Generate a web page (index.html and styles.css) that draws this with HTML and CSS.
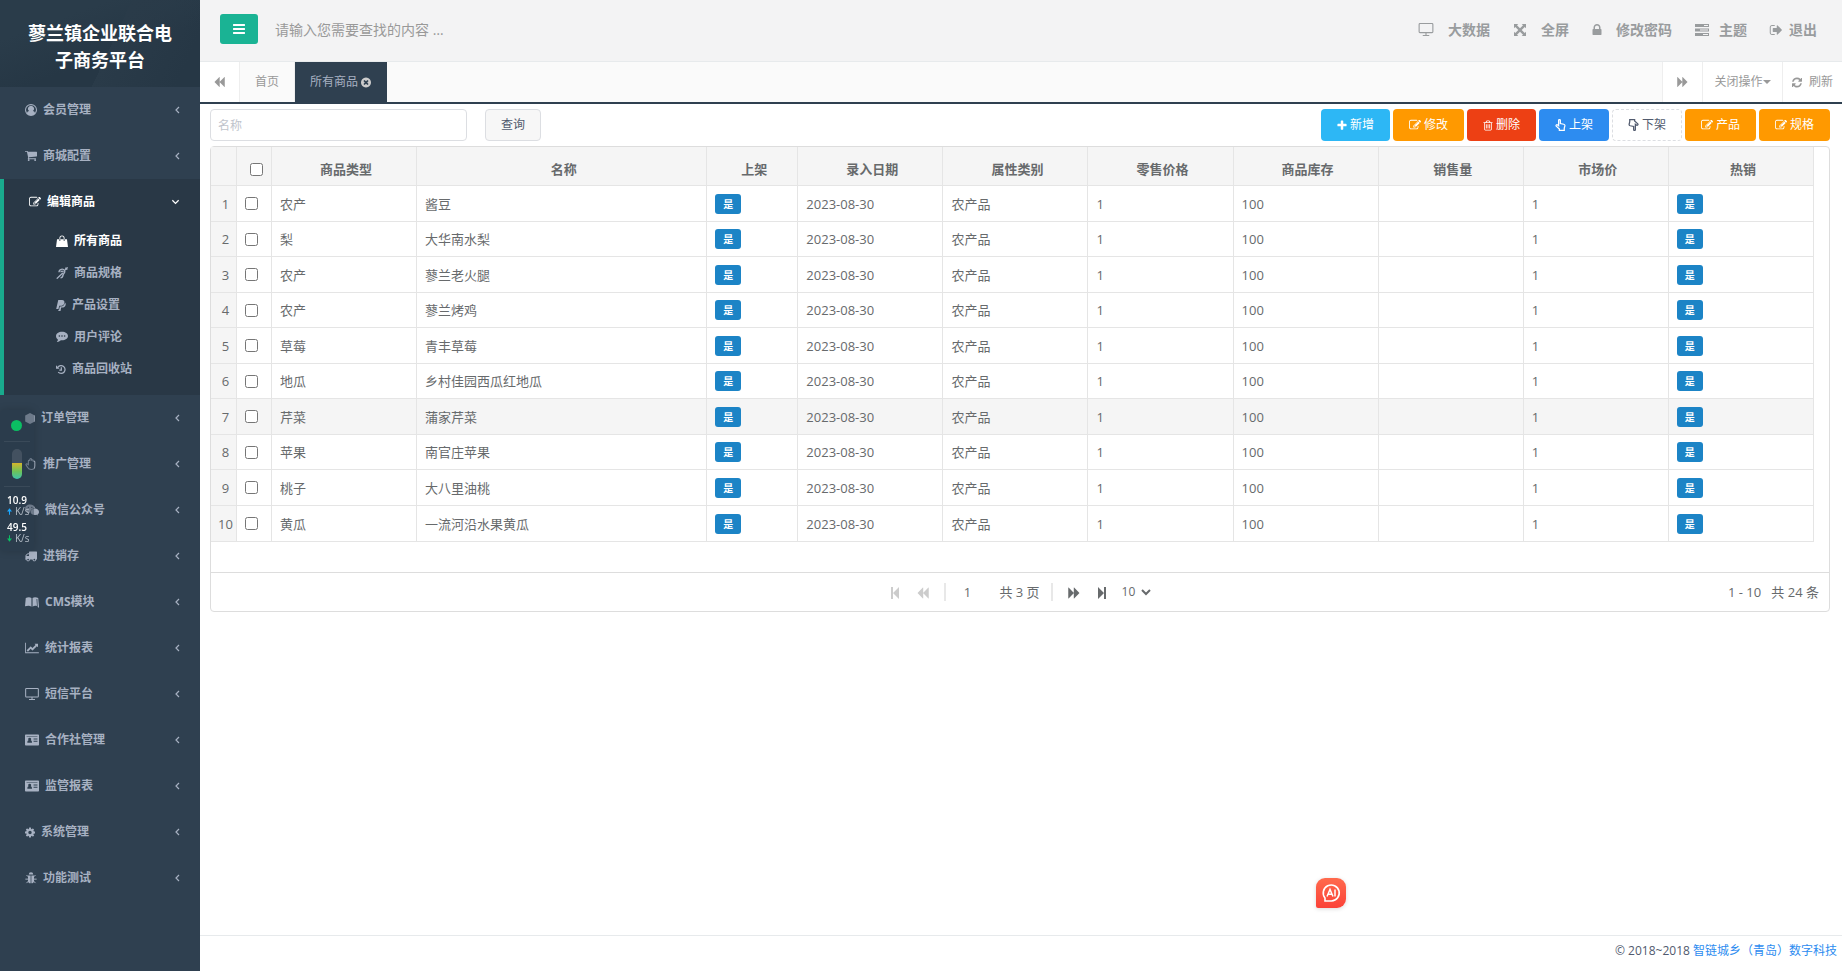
FILE: index.html
```html
<!DOCTYPE html>
<html lang="zh-CN">
<head>
<meta charset="utf-8">
<title>蓼兰镇企业联合电子商务平台</title>
<link rel="stylesheet" href="styles.css">
</head>
<body>
<svg class="sprite" aria-hidden="true">
  <symbol id="bars" viewBox="128 128 1536 1536"><path d="M1664 1344v128q0 26-19 45t-45 19h-1408q-26 0-45-19t-19-45v-128q0-26 19-45t45-19h1408q26 0 45 19t19 45zm0-512v128q0 26-19 45t-45 19h-1408q-26 0-45-19t-19-45v-128q0-26 19-45t45-19h1408q26 0 45 19t19 45zm0-512v128q0 26-19 45t-45 19h-1408q-26 0-45-19t-19-45v-128q0-26 19-45t45-19h1408q26 0 45 19t19 45z"/></symbol>
  <symbol id="plus" viewBox="128 128 1536 1536"><path d="M1600 736v192q0 40-28 68t-68 28h-416v416q0 40-28 68t-68 28h-192q-40 0-68-28t-28-68v-416h-416q-40 0-68-28t-28-68v-192q0-40 28-68t68-28h416v-416q0-40 28-68t68-28h192q40 0 68 28t28 68v416h416q40 0 68 28t28 68z"/></symbol>
  <symbol id="edit" viewBox="0 0 1792 1792"><path d="M888 1184l116-116-152-152-116 116v56h96v96h56zm440-720q-16-16-33 1l-350 350q-17 17-1 33t33-1l350-350q17-17 1-33zm80 594v190q0 119-84.5 203.5t-203.5 84.5h-832q-119 0-203.5-84.5t-84.5-203.5v-832q0-119 84.5-203.5t203.5-84.5h832q63 0 117 25 15 7 18 23 3 17-9 29l-49 49q-14 14-32 8-23-6-45-6h-832q-66 0-113 47t-47 113v832q0 66 47 113t113 47h832q66 0 113-47t47-113v-126q0-13 9-22l64-64q15-15 35-7t20 29zm-96-738l288 288-672 672h-288v-288zm444 132l-92 92-288-288 92-92q28-28 68-28t68 28l152 152q28 28 28 68t-28 68z"/></symbol>
  <symbol id="cart" viewBox="64 128 1664 1664"><path d="M704 1536q0 52-38 90t-90 38-90-38-38-90 38-90 90-38 90 38 38 90zm896 0q0 52-38 90t-90 38-90-38-38-90 38-90 90-38 90 38 38 90zm128-1088v512q0 24-16.5 42.5t-40.5 21.5l-1044 122q13 60 13 70 0 16-24 64h920q26 0 45 19t19 45-19 45-45 19h-1024q-26 0-45-19t-19-45q0-11 8-31.5t16-36 21.5-40 15.5-29.5l-177-823h-204q-26 0-45-19t-19-45 19-45 45-19h256q16 0 28.5 6.5t19.5 15.5 13 24.5 8 26 5.5 29.5 4.5 26h1201q26 0 45 19t19 45z"/></symbol>
  <symbol id="angle" viewBox="0 0 5 8"><path d="M4 1 1 4l3 3" fill="none" stroke="currentColor" stroke-width="1.200"/></symbol>
  <symbol id="angle-down" viewBox="0 0 10 8"><path d="M1.5 2 5 5.500 8.500 2" fill="none" stroke="currentColor" stroke-width="1.400"/></symbol>
  <symbol id="backward" viewBox="100 100 1664 1592"><path d="M1683 141q19-19 32-13t13 32v1472q0 26-13 32t-32-13l-710-710q-9-9-13-19v710q0 26-13 32t-32-13l-710-710q-19-19-19-45t19-45l710-710q19-19 32-13t13 32v710q4-10 13-19z"/></symbol>
  <symbol id="step" viewBox="0 0 8 12"><path d="M0 0h2v12H0zM8 0v12L2 6z"/></symbol>
  <symbol id="lock" viewBox="320 128 1152 1408"><path d="M640 768h512v-192q0-106-75-181t-181-75-181 75-75 181v192zm832 96v576q0 40-28 68t-68 28h-960q-40 0-68-28t-28-68v-576q0-40 28-68t68-28h32v-192q0-184 132-316t316-132 316 132 132 316v192h32q40 0 68 28t28 68z"/></symbol>
  <symbol id="trash" viewBox="128 64 1536 1664"><path d="M704 736v576q0 14-9 23t-23 9h-64q-14 0-23-9t-9-23v-576q0-14 9-23t23-9h64q14 0 23 9t9 23zm256 0v576q0 14-9 23t-23 9h-64q-14 0-23-9t-9-23v-576q0-14 9-23t23-9h64q14 0 23 9t9 23zm256 0v576q0 14-9 23t-23 9h-64q-14 0-23-9t-9-23v-576q0-14 9-23t23-9h64q14 0 23 9t9 23zm128 724v-948h-896v948q0 22 7 40.5t14.5 27 10.5 8.5h832q3 0 10.5-8.5t14.5-27 7-40.5zm-672-1076h448l-48-117q-7-9-17-11h-317q-10 2-17 11zm928 32v64q0 14-9 23t-23 9h-96v948q0 83-47 143.5t-113 60.5h-832q-66 0-113-58.5t-47-141.5v-952h-96q-14 0-23-9t-9-23v-64q0-14 9-23t23-9h309l70-167q15-37 54-63t79-26h320q40 0 79 26t54 63l70 167h309q14 0 23 9t9 23z"/></symbol>
  <symbol id="refresh" viewBox="128 128 1536 1536"><path d="M1639 1056q0 5-1 7-64 268-268 434.5t-478 166.5q-146 0-282.5-55t-243.5-157l-129 129q-19 19-45 19t-45-19-19-45v-448q0-26 19-45t45-19h448q26 0 45 19t19 45-19 45l-137 137q71 66 161 102t187 36q134 0 250-65t186-179q11-17 53-117 8-23 30-23h192q13 0 22.5 9.5t9.5 22.5zm25-800v448q0 26-19 45t-45 19h-448q-26 0-45-19t-19-45 19-45l138-138q-148-137-349-137-134 0-250 65t-186 179q-11 17-53 117-8 23-30 23h-199q-13 0-22.5-9.5t-9.5-22.5v-7q65-268 270-434.5t480-166.5q146 0 284 55.5t245 156.5l130-129q19-19 45-19t45 19 19 45z"/></symbol>
  <symbol id="close" viewBox="128 128 1536 1536"><path d="M1277 1122q0-26-19-45l-181-181 181-181q19-19 19-45 0-27-19-46l-90-90q-19-19-46-19-26 0-45 19l-181 181-181-181q-19-19-45-19-27 0-46 19l-90 90q-19 19-19 46 0 26 19 45l181 181-181 181q-19 19-19 45 0 27 19 46l90 90q19 19 46 19 26 0 45-19l181-181 181 181q19 19 45 19 27 0 46-19l90-90q19-19 19-46zm387-226q0 209-103 385.5t-279.5 279.5-385.5 103-385.5-103-279.5-279.5-103-385.5 103-385.5 279.5-279.5 385.5-103 385.5 103 279.5 279.5 103 385.5z"/></symbol>
  <symbol id="cog" viewBox="128 128 1536 1536"><path d="M1152 896q0-106-75-181t-181-75-181 75-75 181 75 181 181 75 181-75 75-181zm512-109v222q0 12-8 23t-20 13l-185 28q-19 54-39 91 35 50 107 138 10 12 10 25t-9 23q-27 37-99 108t-94 71q-12 0-26-9l-138-108q-44 23-91 38-16 136-29 186-7 28-36 28h-222q-14 0-24.5-8.5t-11.5-21.5l-28-184q-49-16-90-37l-141 107q-10 9-25 9-14 0-25-11-126-114-165-168-7-10-7-23 0-12 8-23 15-21 51-66.5t54-70.5q-27-50-41-99l-183-27q-13-2-21-12.5t-8-23.5v-222q0-12 8-23t19-13l186-28q14-46 39-92-40-57-107-138-10-12-10-24 0-10 9-23 26-36 98.5-107.5t94.5-71.5q13 0 26 10l138 107q44-23 91-38 16-136 29-186 7-28 36-28h222q14 0 24.5 8.5t11.5 21.5l28 184q49 16 90 37l142-107q9-9 24-9 13 0 25 10 129 119 165 170 7 8 7 22 0 12-8 23-15 21-51 66.5t-54 70.5q26 50 41 98l183 28q13 2 21 12.5t8 23.5z"/></symbol>
  <symbol id="truck" viewBox="64 128 1728 1536"><path d="M640 1408q0-52-38-90t-90-38-90 38-38 90 38 90 90 38 90-38 38-90zm-384-512h384v-256h-158q-13 0-22 9l-195 195q-9 9-9 22v30zm1280 512q0-52-38-90t-90-38-90 38-38 90 38 90 90 38 90-38 38-90zm256-1088v1024q0 15-4 26.5t-13.5 18.5-16.5 11.5-23.5 6-22.5 2-25.5 0-22.5-.5q0 106-75 181t-181 75-181-75-75-181h-384q0 106-75 181t-181 75-181-75-75-181h-64q-3 0-22.5.5t-25.5 0-22.5-2-23.5-6-16.5-11.5-13.5-18.5-4-26.5q0-26 19-45t45-19v-320q0-8-.5-35t0-38 2.5-34.5 6.5-37 14-30.5 22.5-30l198-198q19-19 50.5-32t58.5-13h160v-192q0-26 19-45t45-19h1024q26 0 45 19t19 45z"/></symbol>
  <symbol id="signout" viewBox="64 128 1600 1536"><path d="M704 1440q0 4 1 20t.5 26.5-3 23.5-10 19.5-20.5 6.5h-320q-119 0-203.5-84.5t-84.5-203.5v-704q0-119 84.5-203.5t203.5-84.5h320q13 0 22.5 9.5t9.5 22.5q0 4 1 20t.5 26.5-3 23.5-10 19.5-20.5 6.5h-320q-66 0-113 47t-47 113v704q0 66 47 113t113 47h312l11.5 1 11.5 3 8 5.5 7 9 2 13.5zm928-544q0 26-19 45l-544 544q-19 19-45 19t-45-19-19-45v-288h-448q-26 0-45-19t-19-45v-384q0-26 19-45t45-19h448v-288q0-26 19-45t45-19 45 19l544 544q19 19 19 45z"/></symbol>
  <symbol id="chart" viewBox="-128 0 2048 1792"><path d="M1920 1536v128h-2048v-1536h128v1408h1920zm-128-1248v435q0 21-19.5 29.5t-35.5-7.5l-121-121-633 633q-10 10-23 10t-23-10l-233-233-416 416-192-192 585-585q10-10 23-10t23 10l233 233 464-464-121-121q-16-16-7.5-35.5t29.5-19.5h435q14 0 23 9t9 23z"/></symbol>
  <symbol id="user" viewBox="0 0 16 16"><path fill-rule="evenodd" d="M8 0a8 8 0 1 1 0 16A8 8 0 0 1 8 0zm0 1.200a6.800 6.800 0 0 0-5.400 10.900c.5-1.800 1.500-2.600 2.900-2.700a3.900 3.900 0 1 1 5 0c1.400.1 2.400.9 2.900 2.700A6.800 6.800 0 0 0 8 1.200z"/></symbol>
  <symbol id="bag" viewBox="0 0 14 14"><path fill-rule="evenodd" d="M1.200 5h11.600L14 14H0zM4 7V3.500a3 3 0 0 1 6 0V7H9V3.500a2 2 0 0 0-4 0V7z"/></symbol>
  <symbol id="deaf" viewBox="0 0 16 16"><path d="M4 7a4 4 0 0 1 7.500-2c1 2.500-1.500 3.500-2 5.500-.3 2-1.500 4-3.500 4M6.500 7a1.600 1.600 0 0 1 3.200 0M15.500.5l-4 4M9 8 1 15.500M12.500 1l2.500 2.500" fill="none" stroke="currentColor" stroke-width="1.800"/></symbol>
  <symbol id="paypal" viewBox="0 0 14 16"><path d="M3 0h5.500c3 0 4 2 3.300 4.300C11 7.500 9 8.500 6 8.500H4.500L3.300 13H0z"/><path d="M12.700 3.500c1.300 1 1.400 2.500.9 4C13 10 11 11 8.500 11H7.300l-1 5H3l.4-2H4.200l1.100-4.600h1.500c3.200 0 5.300-1.900 5.900-5.900z"/></symbol>
  <symbol id="comment" viewBox="0 0 16 14"><path fill-rule="evenodd" d="M8 0c4.400 0 8 2.500 8 5.700s-3.600 5.700-8 5.700l-1.600-.1C5 12.700 3 13.600 1 13.800c1-1 1.400-2 1.500-3.400C.9 9.300 0 7.600 0 5.700 0 2.500 3.600 0 8 0zM4.500 4.600a1.100 1.100 0 1 0 0 2.200 1.100 1.100 0 0 0 0-2.200zm3.500 0a1.100 1.100 0 1 0 0 2.200 1.100 1.100 0 0 0 0-2.200zm3.500 0a1.100 1.100 0 1 0 0 2.200 1.100 1.100 0 0 0 0-2.200z"/></symbol>
  <symbol id="history" viewBox="0 0 16 16"><path d="M3 4.500a6.300 6.300 0 1 1 .5 7.800M8.500 4.500v4.300H5.300" fill="none" stroke="currentColor" stroke-width="2"/><path d="M0 1v5.700h5.700z"/></symbol>
  <symbol id="box" viewBox="0 0 14 16"><path d="M7 0l7 3.700v8.600L7 16l-7-3.700V3.700z"/></symbol>
  <symbol id="hand" viewBox="0 0 16 16"><path d="M4.500 9V4c0-1.500 2-1.500 2 0V2c0-1.600 2.200-1.600 2.200 0v1.500c0-1.500 2.200-1.500 2.200 0v1.500c0-1.300 2.200-1.300 2.200.2v5c0 3-1.500 5-4.600 5-3 0-4-1-5.200-3L1.500 9.500c-.8-1.500.9-2.700 2-1.200z" fill="none" stroke="currentColor" stroke-width="1.400"/></symbol>
  <symbol id="wechat" viewBox="0 0 18 14"><path fill-rule="evenodd" d="M6.500 0c3.300 0 6 2 6.400 4.700-3.600 0-6.400 2.400-6.200 5.800-.9.100-1.700 0-2.500-.2L2 11.500l.6-2C1 8.500 0 7 0 5.200 0 2.300 3 0 6.500 0zM4.300 2.700a.9.900 0 1 0 0 1.800.9.900 0 0 0 0-1.800zm4.500 0a.9.900 0 1 0 0 1.800.9.900 0 0 0 0-1.800z"/><path d="M12.700 5.200c2.900 0 5.300 1.900 5.300 4.300 0 1.300-.7 2.400-1.900 3.200l.4 1.300-1.700-.8c-4 1.100-7.400-1-7.400-3.700 0-2.400 2.400-4.300 5.300-4.300z"/></symbol>
  <symbol id="book" viewBox="0 0 18 14"><path d="M0 12.500 1 2C3.500.7 6.500.5 8.300 2v11c-2-1.500-5-1.300-8.300-.5zM9.700 2C11.500.5 14.500.7 17 2l1 10.500V14h-1.200l-.5-.8L15.800 3h-1l.6 9.300c-2-.6-4-.5-5.700.7z"/></symbol>
  <symbol id="monitor" viewBox="0 0 16 14"><path d="M1.500.6h13q.9 0 .9.900v8q0 .9-.9.900h-13q-.9 0-.9-.9v-8q0-.9.900-.9zM8 10.400v3M4.500 13.400h7" fill="none" stroke="currentColor" stroke-width="1.200"/></symbol>
  <symbol id="card" viewBox="0 0 18 14"><path fill-rule="evenodd" d="M1 0h16q1 0 1 1v12q0 1-1 1H1q-1 0-1-1V1q0-1 1-1zm5 4a1.900 1.900 0 0 0-1.300 3.300C3.500 7.500 3 8.500 3 10.500h6c0-2-.5-3-1.700-3.200A1.900 1.900 0 0 0 6 4zm5 1v1.300h5V5zm0 3v1.300h5V8zM2 1.800v.7h14v-.7z"/></symbol>
  <symbol id="bug" viewBox="0 0 16 16"><path d="M5 3.300a3 3 0 0 1 6 0zM4 4.500h3.500V15c-1.800 0-3-.8-3.500-2.500zM8.500 4.500H12v8c-.5 1.700-1.700 2.500-3.500 2.500z"/><path d="M4.500 6.500 2 4M11.500 6.500 14 4M4.500 9.500H.5M11.500 9.500h4M4.700 12 2 14.800M11.300 12l2.700 2.800" stroke="currentColor" stroke-width="1.300"/></symbol>
  <symbol id="expand" viewBox="0 0 14 14"><path d="M0 0h5L3.500 1.500 7 5l3.500-3.500L9 0h5v5l-1.500-1.500L9 7l3.500 3.500L14 9v5H9l1.500-1.500L7 9l-3.500 3.500L5 14H0V9l1.500 1.500L5 7 1.500 3.500 0 5z"/></symbol>
  <symbol id="tasks" viewBox="0 0 14 12"><path fill-rule="evenodd" d="M0 0h14v3H0zM0 4.500h14v3H0zM0 9h14v3H0zM9 1v1h4V1zM5 5.500v1h8v-1zM8 10v1h5v-1z"/></symbol>
  <symbol id="point-up" viewBox="0 0 14 16"><path d="M4.500 9V2c0-1.700 2.300-1.700 2.300 0v4l4.500 1c1.200.3 1.700 1 1.500 2.200l-.8 3.300v2.800H5.500v-2L1.300 9.500C.5 8.200 2 7 3.200 8z" fill="none" stroke="currentColor" stroke-width="1.700"/></symbol>
  <symbol id="ai" viewBox="0 0 30 30"><path d="M9 23v-3a8 8 0 1 1 6.500 3z" fill="none" stroke="#fff" stroke-width="1.600"/><path d="M11 18.500l3-7 3 7M12 16.300h4M19 11.500v7" fill="none" stroke="#fff" stroke-width="1.500"/></symbol>
  <symbol id="arrow-up" viewBox="0 0 6 8"><path d="M3 0l3 4H3.600v4H2.400V4H0z"/></symbol>
</svg>

<div class="app">
  <nav class="sidebar">
    <h1 class="brand">蓼兰镇企业联合电子商务平台</h1>
    <ul class="menu">
      <li><a class="menu-link" href="#"><svg class="icon"><use href="#user"/></svg>会员管理<svg class="arrow"><use href="#angle"/></svg></a></li>
      <li><a class="menu-link" href="#"><svg class="icon"><use href="#cart"/></svg>商城配置<svg class="arrow"><use href="#angle"/></svg></a></li>
      <li class="open">
        <a class="menu-link" href="#"><svg class="icon"><use href="#edit"/></svg>编辑商品<svg class="arrow arrow-open"><use href="#angle-down"/></svg></a>
        <ul class="submenu">
          <li><a class="sub-link current" href="#"><svg class="icon"><use href="#bag"/></svg>所有商品</a></li>
          <li><a class="sub-link" href="#"><svg class="icon"><use href="#deaf"/></svg>商品规格</a></li>
          <li><a class="sub-link" href="#"><svg class="icon icon-xs"><use href="#paypal"/></svg>产品设置</a></li>
          <li><a class="sub-link" href="#"><svg class="icon"><use href="#comment"/></svg>用户评论</a></li>
          <li><a class="sub-link" href="#"><svg class="icon icon-xs"><use href="#history"/></svg>商品回收站</a></li>
        </ul>
      </li>
      <li><a class="menu-link" href="#"><svg class="icon icon-xs"><use href="#box"/></svg>订单管理<svg class="arrow"><use href="#angle"/></svg></a></li>
      <li><a class="menu-link" href="#"><svg class="icon"><use href="#hand"/></svg>推广管理<svg class="arrow"><use href="#angle"/></svg></a></li>
      <li><a class="menu-link" href="#"><svg class="icon icon-lg"><use href="#wechat"/></svg>微信公众号<svg class="arrow"><use href="#angle"/></svg></a></li>
      <li><a class="menu-link" href="#"><svg class="icon"><use href="#truck"/></svg>进销存<svg class="arrow"><use href="#angle"/></svg></a></li>
      <li><a class="menu-link" href="#"><svg class="icon icon-lg"><use href="#book"/></svg>CMS模块<svg class="arrow"><use href="#angle"/></svg></a></li>
      <li><a class="menu-link" href="#"><svg class="icon icon-lg"><use href="#chart"/></svg>统计报表<svg class="arrow"><use href="#angle"/></svg></a></li>
      <li><a class="menu-link" href="#"><svg class="icon icon-lg"><use href="#monitor"/></svg>短信平台<svg class="arrow"><use href="#angle"/></svg></a></li>
      <li><a class="menu-link" href="#"><svg class="icon icon-lg"><use href="#card"/></svg>合作社管理<svg class="arrow"><use href="#angle"/></svg></a></li>
      <li><a class="menu-link" href="#"><svg class="icon icon-lg"><use href="#card"/></svg>监管报表<svg class="arrow"><use href="#angle"/></svg></a></li>
      <li><a class="menu-link" href="#"><svg class="icon icon-xs"><use href="#cog"/></svg>系统管理<svg class="arrow"><use href="#angle"/></svg></a></li>
      <li><a class="menu-link" href="#"><svg class="icon"><use href="#bug"/></svg>功能测试<svg class="arrow"><use href="#angle"/></svg></a></li>
    </ul>
  </nav>

  <div class="page">
    <header class="topbar">
      <button class="toggle" type="button" aria-label="菜单"><svg class="icon icon-lg"><use href="#bars"/></svg></button>
      <input class="top-search" type="text" aria-label="搜索" placeholder="请输入您需要查找的内容 …">
      <a class="top-link" href="#"><svg class="icon icon-xl"><use href="#monitor"/></svg>大数据</a>
      <a class="top-link" href="#"><svg class="icon icon-lg"><use href="#expand"/></svg>全屏</a>
      <a class="top-link" href="#"><svg class="icon icon-xs"><use href="#lock"/></svg>修改密码</a>
      <a class="top-link tight" href="#"><svg class="icon icon-lg"><use href="#tasks"/></svg>主题</a>
      <a class="top-link exit" href="#"><svg class="icon icon-lg"><use href="#signout"/></svg>退出</a>
    </header>

    <div class="tabs">
      <button class="tab-tool first" type="button" aria-label="向左"><svg class="icon icon-sm"><use href="#backward"/></svg></button>
      <a class="tab" href="#">首页</a>
      <a class="tab active" href="#">所有商品<svg class="icon icon-xs"><use href="#close"/></svg></a>
      <span class="tab-space"></span>
      <button class="tab-tool" type="button" aria-label="向右"><svg class="icon icon-sm flip"><use href="#backward"/></svg></button>
      <button class="tab-tool ops" type="button">关闭操作<span class="caret"></span></button>
      <a class="tab-tool reload" href="#"><svg class="icon icon-xs"><use href="#refresh"/></svg>刷新</a>
    </div>

    <main class="content">
      <div class="toolbar">
        <input class="field" type="text" aria-label="名称" placeholder="名称">
        <button class="btn query" type="button">查询</button>
        <div class="actions">
          <button class="btn info" type="button"><svg class="icon icon-xs"><use href="#plus"/></svg>新增</button>
          <button class="btn warn" type="button"><svg class="icon"><use href="#edit"/></svg>修改</button>
          <button class="btn danger" type="button"><svg class="icon icon-xs"><use href="#trash"/></svg>删除</button>
          <button class="btn primary" type="button"><svg class="icon icon-sm"><use href="#point-up"/></svg>上架</button>
          <button class="btn dashed" type="button"><svg class="icon icon-sm turn"><use href="#point-up"/></svg>下架</button>
          <button class="btn warn" type="button"><svg class="icon"><use href="#edit"/></svg>产品</button>
          <button class="btn warn" type="button"><svg class="icon"><use href="#edit"/></svg>规格</button>
        </div>
      </div>

      <section class="grid">
        <div class="grid-body">
          <table>
            <colgroup><col class="c-num"><col class="c-check"><col class="c-std"><col class="c-name"><col class="c-flag"><col class="c-std"><col class="c-std"><col class="c-std"><col class="c-std"><col class="c-std"><col class="c-std"><col class="c-std"></colgroup>
            <thead>
              <tr><th></th><th><input type="checkbox" aria-label="全选"></th><th>商品类型</th><th>名称</th><th>上架</th><th>录入日期</th><th>属性类别</th><th>零售价格</th><th>商品库存</th><th>销售量</th><th>市场价</th><th>热销</th></tr>
            </thead>
            <tbody>
              <tr><td>1</td><td><input type="checkbox" aria-label="选择 1"></td><td>农产</td><td>酱豆</td><td><span class="badge">是</span></td><td>2023-08-30</td><td>农产品</td><td>1</td><td>100</td><td></td><td>1</td><td><span class="badge">是</span></td></tr>
              <tr><td>2</td><td><input type="checkbox" aria-label="选择 2"></td><td>梨</td><td>大华南水梨</td><td><span class="badge">是</span></td><td>2023-08-30</td><td>农产品</td><td>1</td><td>100</td><td></td><td>1</td><td><span class="badge">是</span></td></tr>
              <tr><td>3</td><td><input type="checkbox" aria-label="选择 3"></td><td>农产</td><td>蓼兰老火腿</td><td><span class="badge">是</span></td><td>2023-08-30</td><td>农产品</td><td>1</td><td>100</td><td></td><td>1</td><td><span class="badge">是</span></td></tr>
              <tr><td>4</td><td><input type="checkbox" aria-label="选择 4"></td><td>农产</td><td>蓼兰烤鸡</td><td><span class="badge">是</span></td><td>2023-08-30</td><td>农产品</td><td>1</td><td>100</td><td></td><td>1</td><td><span class="badge">是</span></td></tr>
              <tr><td>5</td><td><input type="checkbox" aria-label="选择 5"></td><td>草莓</td><td>青丰草莓</td><td><span class="badge">是</span></td><td>2023-08-30</td><td>农产品</td><td>1</td><td>100</td><td></td><td>1</td><td><span class="badge">是</span></td></tr>
              <tr><td>6</td><td><input type="checkbox" aria-label="选择 6"></td><td>地瓜</td><td>乡村佳园西瓜红地瓜</td><td><span class="badge">是</span></td><td>2023-08-30</td><td>农产品</td><td>1</td><td>100</td><td></td><td>1</td><td><span class="badge">是</span></td></tr>
              <tr class="hovered"><td>7</td><td><input type="checkbox" aria-label="选择 7"></td><td>芹菜</td><td>蒲家芹菜</td><td><span class="badge">是</span></td><td>2023-08-30</td><td>农产品</td><td>1</td><td>100</td><td></td><td>1</td><td><span class="badge">是</span></td></tr>
              <tr><td>8</td><td><input type="checkbox" aria-label="选择 8"></td><td>苹果</td><td>南官庄苹果</td><td><span class="badge">是</span></td><td>2023-08-30</td><td>农产品</td><td>1</td><td>100</td><td></td><td>1</td><td><span class="badge">是</span></td></tr>
              <tr><td>9</td><td><input type="checkbox" aria-label="选择 9"></td><td>桃子</td><td>大八里油桃</td><td><span class="badge">是</span></td><td>2023-08-30</td><td>农产品</td><td>1</td><td>100</td><td></td><td>1</td><td><span class="badge">是</span></td></tr>
              <tr><td>10</td><td><input type="checkbox" aria-label="选择 10"></td><td>黄瓜</td><td>一流河沿水果黄瓜</td><td><span class="badge">是</span></td><td>2023-08-30</td><td>农产品</td><td>1</td><td>100</td><td></td><td>1</td><td><span class="badge">是</span></td></tr>
            </tbody>
          </table>
        </div>
        <div class="pager">
          <div class="pager-nav">
            <button class="page-btn" type="button" disabled aria-label="首页"><svg class="step"><use href="#step"/></svg></button>
            <button class="page-btn" type="button" disabled aria-label="上一页"><svg class="icon"><use href="#backward"/></svg></button>
            <span class="sep"></span>
            <input class="page-input" type="text" value="1" aria-label="页码">
            <span class="page-total">共 3 页</span>
            <span class="sep"></span>
            <button class="page-btn" type="button" aria-label="下一页"><svg class="icon flip"><use href="#backward"/></svg></button>
            <button class="page-btn" type="button" aria-label="末页"><svg class="step flip"><use href="#step"/></svg></button>
            <label class="page-size"><select aria-label="每页条数"><option>10</option><option>20</option><option>30</option></select><svg class="chevron" viewBox="0 0 10 7"><path d="M1 1l4 4 4-4" fill="none" stroke="currentColor" stroke-width="2"/></svg></label>
          </div>
          <span class="pager-info">1 - 10&nbsp;&nbsp; 共 24 条</span>
        </div>
      </section>
    </main>

    <footer class="footer">© 2018~2018 <a href="#">智链城乡（青岛）数字科技</a></footer>
  </div>
</div>

<aside class="netmon">
  <span class="dot"></span>
  <span class="gauge"></span>
  <div class="rate"><b>10.9</b><span><svg class="up"><use href="#arrow-up"/></svg>K/s</span></div>
  <div class="rate"><b>49.5</b><span><svg class="down"><use href="#arrow-up"/></svg>K/s</span></div>
</aside>
<button class="ai" type="button" aria-label="AI"><svg><use href="#ai"/></svg></button>
</body>
</html>
```
FILE: styles.css
```css
* { box-sizing: border-box; }
body {
  margin: 0;
  font: 13px/18px "Open Sans", "Noto Sans CJK SC", sans-serif;
  color: #676a6c;
  background: #fff;
}
button, input, select { font: inherit; color: inherit; margin: 0; }
button { cursor: pointer; }
a { text-decoration: none; color: inherit; }
ul { list-style: none; margin: 0; padding: 0; }
.sprite { position: absolute; width: 0; height: 0; }
svg { fill: currentColor; flex: none; }
.icon { width: 12px; height: 12px; }
.icon-xs { width: 10px; height: 11px; }
.icon-sm { width: 11px; height: 12px; }
.icon-lg { width: 14px; height: 12px; }
.icon-xl { width: 16px; height: 13px; }
.flip { transform: scaleX(-1); }
.turn { transform: rotate(180deg); }

.app { display: flex; min-height: 100vh; }

/* sidebar */
.sidebar { width: 200px; flex: none; background: #2f4050; color: #a7b1c2; font-size: 12px; font-weight: bold; }
.brand {
  margin: 0;
  padding: 20px 20px 13px;
  font-size: 18px;
  line-height: 27px;
  text-align: center;
  color: #fff;
  background:
    linear-gradient(115deg, transparent 55%, #2a3b49 55%, transparent 90%),
    linear-gradient(160deg, #2a3c4a 25%, #263745 60%);
}
.menu-link { display: flex; align-items: center; gap: 6px; height: 46px; padding: 0 20px 0 25px; }
.arrow { width: 5px; height: 8px; margin-left: auto; }
.arrow-open { width: 9px; height: 8px; }
.open { border-left: 4px solid #19aa8d; background: #293846; padding-bottom: 10px; }
.open > .menu-link { color: #fff; }
.sub-link { display: flex; align-items: center; gap: 6px; height: 32px; padding-left: 52px; }
.current { color: #fff; }

/* top bar */
.page { flex: 1; min-width: 0; display: flex; flex-direction: column; }
.topbar {
  display: flex;
  align-items: center;
  height: 62px;
  padding: 0 25px 2px 20px;
  background: #f3f3f4;
  border-bottom: 1px solid #e7eaec;
  color: #999c9e;
  font-size: 14px;
}
.toggle {
  display: flex; align-items: center; justify-content: center;
  width: 38px; height: 30px; margin-bottom: 2px; padding: 0;
  border: 0; border-radius: 3px; background: #1ab394; color: #fff;
}
.top-search { flex: 1; min-width: 0; margin-left: 17px; padding: 0; border: 0; background: none; }
.top-search::placeholder { color: #999; opacity: 1; }
.top-link { display: flex; align-items: center; gap: 14px; margin-left: 23px; font-weight: bold; }
.top-link.tight { gap: 10px; }
.top-link.exit { gap: 6px; margin-left: 22px; }

/* tabs */
.tabs { display: flex; height: 42px; background: #fafafa; border-bottom: 2px solid #2f4050; color: #999; font-size: 12px; }
.tab, .tab-tool { display: flex; align-items: center; justify-content: center; }
.tab { padding: 0 15px; border-right: 1px solid #eee; gap: 3px; }
.tab.active { background: #2f4050; color: #a7b1c2; border-color: #2f4050; }
.tab.active .icon { color: #ccc; }
.tab-space { flex: 1; }
.tab-tool { width: 40px; padding: 0; border: 0; border-left: 1px solid #eee; background: #fff; }
.tab-tool.first { border-left: 0; border-right: 1px solid #eee; }
.tab-tool.ops { width: 80px; }
.tab-tool.reload { width: 60px; gap: 7px; }
.caret { border: 4px solid transparent; border-top-color: currentColor; border-bottom: 0; }

/* toolbar */
.content { flex: 1; padding: 5px 12px 0 10px; }
.toolbar { display: flex; margin-bottom: 5px; font-size: 12px; }
.field { width: 257px; height: 32px; padding: 0 7px; border: 1px solid #dcdee2; border-radius: 4px; }
.field::placeholder { color: #c0c4cc; opacity: 1; }
.btn {
  display: flex; align-items: center; justify-content: center; gap: 3px;
  height: 32px; padding: 0 15px; border: 1px solid transparent; border-radius: 4px;
  color: #fff;
}
.query { margin-left: 18px; background: #f7f7f7; border-color: #dcdee2; color: #515a6e; }
.actions { display: flex; gap: 3px; margin-left: auto; }
.info { background: #2db7f5; }
.warn { background: #f90; }
.danger { background: #ed4014; }
.primary { background: #2d8cf0; }
.dashed { background: #fff; border: 1px dashed #dcdee2; color: #515a6e; }

/* data grid */
.grid { border: 1px solid #ddd; border-radius: 4px; }
.grid-body { padding: 0 15px 30px 0; border-bottom: 1px solid #ddd; }
table { width: 100%; table-layout: fixed; border-collapse: separate; border-spacing: 0; }
.c-num { width: 26px; }
.c-check { width: 35px; }
.c-std { width: 145px; }
.c-name { width: 290px; }
.c-flag { width: 91px; }
th, td { padding: 0 6px 0 8px; border-right: 1px solid #e5e5e5; border-bottom: 1px solid #e5e5e5; }
th { height: 39px; padding: 6px 4px 0 8px; background: #f5f5f5; }
td { height: 36px; text-align: left; }
tr:nth-child(even):not(:last-child) td { height: 35px; }
td:first-child { padding: 0 0 0 4px; text-align: center; background: #f5f5f5; }
input[type="checkbox"] { display: block; width: 13px; height: 13px; }
th input[type="checkbox"] { margin-left: 5px; }
.hovered td { background: #f5f5f5; }
.badge {
  display: block; width: 26px; height: 20px; border-radius: 3px;
  background: #1c84c6; color: #fff; font-size: 10px; line-height: 20px; font-weight: bold; text-align: center;
}

/* pager */
.pager { display: grid; grid-template-columns: 1fr auto 1fr; align-items: center; height: 38px; padding: 0 10px; }
.pager-nav { grid-column: 2; display: flex; align-items: center; padding-right: 8px; }
.page-btn { display: flex; align-items: center; justify-content: center; width: 28px; height: 24px; padding: 2px 0 0; border: 0; background: none; }
.page-btn:disabled { color: #ccc; }
.step { width: 8px; height: 12px; }
.sep { width: 2px; height: 18px; margin: 0 7px; background: #e8e8e8; }
.page-input { width: 28px; padding: 0; border: 0; background: none; text-align: center; }
.page-total { margin: 0 4px 0 18px; }
.page-size { display: flex; align-items: center; gap: 5px; margin-left: 6px; }
.page-size select { appearance: none; padding: 0; border: 0; background: none; font-size: 12px; }
.chevron { width: 10px; height: 7px; }
.pager-info { text-align: right; }

.footer { height: 36px; padding: 6px 5px; border-top: 1px solid #e7eaec; text-align: right; font-size: 12px; line-height: 18px; color: #515a6e; }
.footer a { color: #2d8cf0; }

/* floating widgets */
.netmon {
  position: fixed; left: 0; top: 410px; width: 34px; height: 141px;
  border-radius: 4px; background: rgba(41, 56, 70, .45); box-shadow: 0 0 8px rgba(0, 0, 0, .15);
  color: #fff; font-size: 10px; line-height: 11px;
}
.dot { display: block; width: 11px; height: 11px; margin: 10px 0 0 11px; border-radius: 50%; background: #0bbf63; }
.gauge { display: block; margin: 10px 4px 0; padding: 7px 0; border: solid #3a4a59; border-width: 1px 0; }
.gauge::before {
  content: ""; display: block; width: 10px; height: 30px; margin-left: 8px; border-radius: 5px;
  background: linear-gradient(#435160 46%, #d9b52a 46%, #6cc35a 75%, #3fc4ad);
}
.rate { margin: 5px 0 0 7px; }
.gauge + .rate { margin-top: 8px; }
.rate b { display: block; font-weight: 600; }
.rate span { display: flex; align-items: center; gap: 3px; color: #b5bec8; }
.up, .down { width: 5px; height: 7px; color: #1aa7ff; }
.down { color: #0bbf63; transform: rotate(180deg); }
.ai {
  position: fixed; left: 1316px; top: 878px; width: 30px; height: 30px; padding: 0; border: 0;
  border-radius: 9px 9px 9px 2px; background: linear-gradient(#ff6a4d, #fb4238); box-shadow: 0 1px 4px rgba(0, 0, 0, .15);
}
.ai svg { display: block; width: 30px; height: 30px; }
```
